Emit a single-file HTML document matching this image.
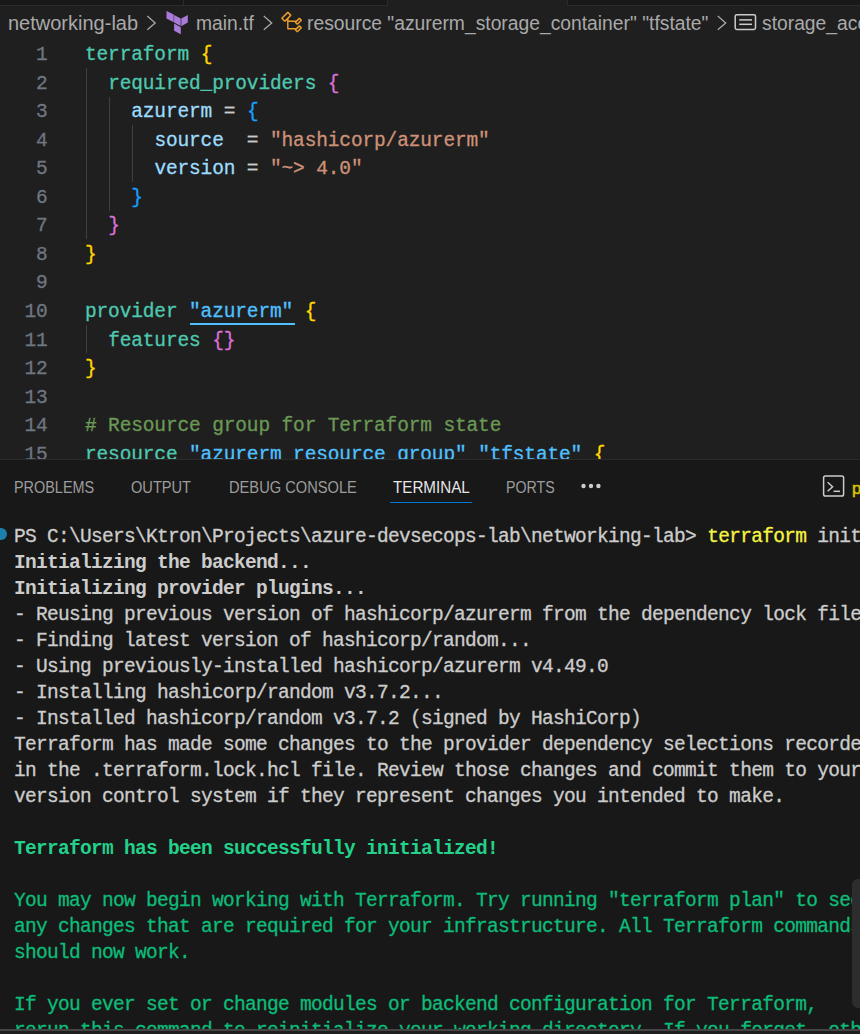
<!DOCTYPE html>
<html><head><meta charset="utf-8">
<style>
*{margin:0;padding:0;box-sizing:border-box}
html,body{width:860px;height:1034px;overflow:hidden;background:#1f1f1f}
body{position:relative;font-family:"Liberation Sans",sans-serif}
.abs{position:absolute}
.ui{position:absolute;white-space:pre;font-family:"Liberation Sans",sans-serif;transform-origin:0 0;line-height:1}
.code{position:absolute;left:85px;top:41px;font-family:"Liberation Mono",monospace;font-size:19.5px;letter-spacing:-0.14px;color:#cccccc}
.code div{position:absolute;left:0;height:28.55px;line-height:28.55px;white-space:pre}
.ln{position:absolute;left:0;width:47.5px;top:41px;text-align:right;font-family:"Liberation Mono",monospace;font-size:19.5px;letter-spacing:-0.2px;color:#6e7681}
.ln div{position:absolute;right:0;height:28.55px;line-height:28.55px}
.code,.ln,.term{-webkit-text-stroke:0.3px currentColor}
.g{position:absolute;width:1px;background:#404040}
.k{color:#4ec9b0}
.v{color:#9cdcfe}
.s{color:#ce9178}
.c{color:#6a9955}
.b1{color:#ffd700}
.b2{color:#da70d6}
.b3{color:#179fff}
.lk{color:#4fc1ff}
.term{position:absolute;left:14px;top:524px;font-family:"Liberation Mono",monospace;font-size:19.5px;letter-spacing:-0.7px;color:#cccccc}
.term div{height:26px;line-height:26px;white-space:pre}
.bd{font-weight:bold;-webkit-text-stroke:0}
.gb{color:#23d18b;font-weight:bold;-webkit-text-stroke:0}
.gr{color:#0dbc79}
.y{color:#f5f543}
</style></head>
<body>
<!-- tab strip -->
<div class="abs" style="left:0;top:0;width:860px;height:5px;background:#181818"></div>
<div class="abs" style="left:0;top:5px;width:388px;height:1px;background:#2b2b2b"></div>
<div class="abs" style="left:567px;top:5px;width:293px;height:1px;background:#2b2b2b"></div>
<div class="abs" style="left:183px;top:0;width:1px;height:5px;background:#2b2b2b"></div>
<div class="abs" style="left:387px;top:0;width:1px;height:6px;background:#2b2b2b"></div>
<div class="abs" style="left:388px;top:0;width:179px;height:6px;background:#1f1f1f"></div>
<div class="abs" style="left:567px;top:0;width:1px;height:6px;background:#2b2b2b"></div>

<!-- breadcrumb -->
<span class="ui" id="bc1" style="left:8px;top:13px;font-size:20px;color:#a9a9a9">networking-lab</span>
<span class="ui" id="bc2" style="left:196px;top:13px;transform:scaleX(0.963);font-size:20px;color:#a9a9a9">main.tf</span>
<span class="ui" id="bc3" style="left:307px;top:13px;transform:scaleX(0.964);font-size:20px;color:#a9a9a9">resource "azurerm_storage_container" "tfstate"</span>
<span class="ui" id="bc4" style="left:762px;top:13px;transform:scaleX(0.964);font-size:20px;color:#a9a9a9">storage_account</span>

<!-- breadcrumb icons -->
<svg class="abs" style="left:0;top:0" width="860" height="40" viewBox="0 0 860 40">
<g fill="none" stroke="#a9a9a9" stroke-width="1.3" stroke-linecap="square">
<polyline points="147.8,16.4 155.2,23 147.8,29.4"/>
<polyline points="264.3,16.4 271.7,23 264.3,29.4"/>
<polyline points="718.3,16.4 725.7,23 718.3,29.4"/>
</g>
<g fill="#a97bd9">
<polygon points="166.5,11 173.7,14.6 173.7,22.3 166.5,18.6"/>
<polygon points="174.1,15 180.7,18.6 180.7,26.1 174.1,22.5"/>
<polygon points="181.3,18.6 187.8,15 187.8,22.6 181.3,26.3"/>
<polygon points="174.1,23.5 180.8,27.2 180.8,34.2 174.1,30.7"/>
</g>
<svg x="279.8" y="10.3" width="24" height="24" viewBox="0 0 16 16"><path fill="#ee9d28" fill-rule="evenodd" clip-rule="evenodd" d="M11.34 9.71h.71l2.67-2.67v-.71L13.38 5h-.7l-1.82 1.81h-5V5.56l1.86-1.85V3l-2-2H5L1 5v.71l2 2h.71l1.14-1.15v5.79l.5.5H10v.52l1.33 1.34h.71l2.67-2.67v-.71L13.37 10h-.7l-1.86 1.85h-5v-4H10v.48l1.34 1.38zm1.69-3.65l.63.63-2 2-.63-.63 2-2zm0 5l.63.63-2 2-.63-.63 2-2zM3.35 6.65l-1.29-1.3 3.29-3.29 1.3 1.29-3.3 3.3z"/></svg>
<g fill="none" stroke="#cccccc" stroke-width="1.5"><rect x="735.2" y="14.7" width="20.3" height="14.7" rx="1.6"/><line x1="739.2" y1="19.9" x2="752" y2="19.9"/><line x1="739.2" y1="24.3" x2="752" y2="24.3"/></g>
</svg>

<!-- line numbers -->
<div class="ln">
<div style="top:0px">1</div><div style="top:29px">2</div><div style="top:57px">3</div><div style="top:86px">4</div><div style="top:114px">5</div><div style="top:143px">6</div><div style="top:171px">7</div><div style="top:200px">8</div><div style="top:228px">9</div><div style="top:257px">10</div><div style="top:286px">11</div><div style="top:314px">12</div><div style="top:343px">13</div><div style="top:371px">14</div><div style="top:400px">15</div>
</div>

<!-- indent guides -->
<div class="g" style="left:86px;top:68px;height:171px"></div>
<div class="g" style="left:109px;top:96.5px;height:114px"></div>
<div class="g" style="left:132px;top:125px;height:57px"></div>
<div class="g" style="left:86px;top:324.5px;height:28.5px"></div>

<div class="abs" style="left:190px;top:323px;width:104.5px;height:1.5px;background:#4fc1ff"></div>
<!-- code -->
<div class="code">
<div style="top:0px"><span class="k">terraform</span> <span class="b1">{</span></div>
<div style="top:29px">  <span class="k">required_providers</span> <span class="b2">{</span></div>
<div style="top:57px">    <span class="v">azurerm</span> = <span class="b3">{</span></div>
<div style="top:86px">      <span class="v">source</span>  = <span class="s">"hashicorp/azurerm"</span></div>
<div style="top:114px">      <span class="v">version</span> = <span class="s">"~&gt; 4.0"</span></div>
<div style="top:143px">    <span class="b3">}</span></div>
<div style="top:171px">  <span class="b2">}</span></div>
<div style="top:200px"><span class="b1">}</span></div>
<div style="top:228px"> </div>
<div style="top:257px"><span class="k">provider</span> <span class="lk">"azurerm"</span> <span class="b1">{</span></div>
<div style="top:286px">  <span class="k">features</span> <span class="b2">{}</span></div>
<div style="top:314px"><span class="b1">}</span></div>
<div style="top:343px"> </div>
<div style="top:371px"><span class="c"># Resource group for Terraform state</span></div>
<div style="top:400px"><span class="k">resource</span> <span class="lk">"azurerm_resource_group"</span> <span class="lk">"tfstate"</span> <span class="b1">{</span></div>
</div>

<!-- panel -->
<div class="abs" style="left:0;top:459px;width:860px;height:575px;background:#181818;border-top:1px solid #2b2b2b"></div>

<span class="ui" id="pt1" style="left:14px;top:479px;transform:scaleX(0.874);font-size:16.5px;color:#9d9d9d">PROBLEMS</span>
<span class="ui" id="pt2" style="left:131px;top:479px;transform:scaleX(0.885);font-size:16.5px;color:#9d9d9d">OUTPUT</span>
<span class="ui" id="pt3" style="left:228.5px;top:479px;transform:scaleX(0.888);font-size:16.5px;color:#9d9d9d">DEBUG CONSOLE</span>
<span class="ui" id="pt4" style="left:392.5px;top:479px;transform:scaleX(0.92);font-size:16.5px;color:#e7e7e7">TERMINAL</span>
<span class="ui" id="pt5" style="left:505.5px;top:479px;transform:scaleX(0.86);font-size:16.5px;color:#9d9d9d">PORTS</span>
<div class="abs" style="left:390px;top:501.5px;width:82px;height:1.5px;background:#0078d4"></div>

<!-- panel icons -->
<svg class="abs" style="left:560px;top:465px" width="300" height="40" viewBox="560 465 300 40">
<g fill="#cccccc"><circle cx="583.5" cy="486" r="2.2"/><circle cx="591" cy="486" r="2.2"/><circle cx="598.4" cy="486" r="2.2"/></g>
<g fill="none" stroke="#cccccc" stroke-width="1.5">
<rect x="823.6" y="476" width="20" height="20" rx="1.8"/>
<polyline points="827.6,482.3 832.6,486.8 827.6,491.3"/>
<line x1="833.5" y1="491.3" x2="840" y2="491.3"/>
</g>
</svg>
<span class="ui" style="left:852px;top:480px;font-size:16.5px;color:#dcc200;-webkit-text-stroke:0.5px #dcc200">pwsh</span>

<!-- terminal -->
<div class="abs" style="left:-5.8px;top:527.7px;width:12.5px;height:12.5px;border-radius:50%;background:#1b80ad"></div>
<div class="term">
<div>PS C:\Users\Ktron\Projects\azure-devsecops-lab\networking-lab&gt; <span class="y">terraform</span> init</div>
<div class="bd">Initializing the backend...</div>
<div class="bd">Initializing provider plugins...</div>
<div>- Reusing previous version of hashicorp/azurerm from the dependency lock file</div>
<div>- Finding latest version of hashicorp/random...</div>
<div>- Using previously-installed hashicorp/azurerm v4.49.0</div>
<div>- Installing hashicorp/random v3.7.2...</div>
<div>- Installed hashicorp/random v3.7.2 (signed by HashiCorp)</div>
<div>Terraform has made some changes to the provider dependency selections recorded</div>
<div>in the .terraform.lock.hcl file. Review those changes and commit them to your</div>
<div>version control system if they represent changes you intended to make.</div>
<div> </div>
<div class="gb">Terraform has been successfully initialized!</div>
<div> </div>
<div class="gr">You may now begin working with Terraform. Try running "terraform plan" to see</div>
<div class="gr">any changes that are required for your infrastructure. All Terraform commands</div>
<div class="gr">should now work.</div>
<div> </div>
<div class="gr">If you ever set or change modules or backend configuration for Terraform,</div>
<div class="gr">rerun this command to reinitialize your working directory. If you forget, other</div>
</div>

<!-- scrollbar -->
<div class="abs" style="left:852px;top:879px;width:14px;height:129px;border-radius:6px;background:#2d2d2d"></div>
<!-- bottom strip -->
<div class="abs" style="left:0;top:1029px;width:860px;height:2px;background:#454545"></div>
<div class="abs" style="left:0;top:1031px;width:860px;height:3px;background:#1f1f1f"></div>
</body></html>
